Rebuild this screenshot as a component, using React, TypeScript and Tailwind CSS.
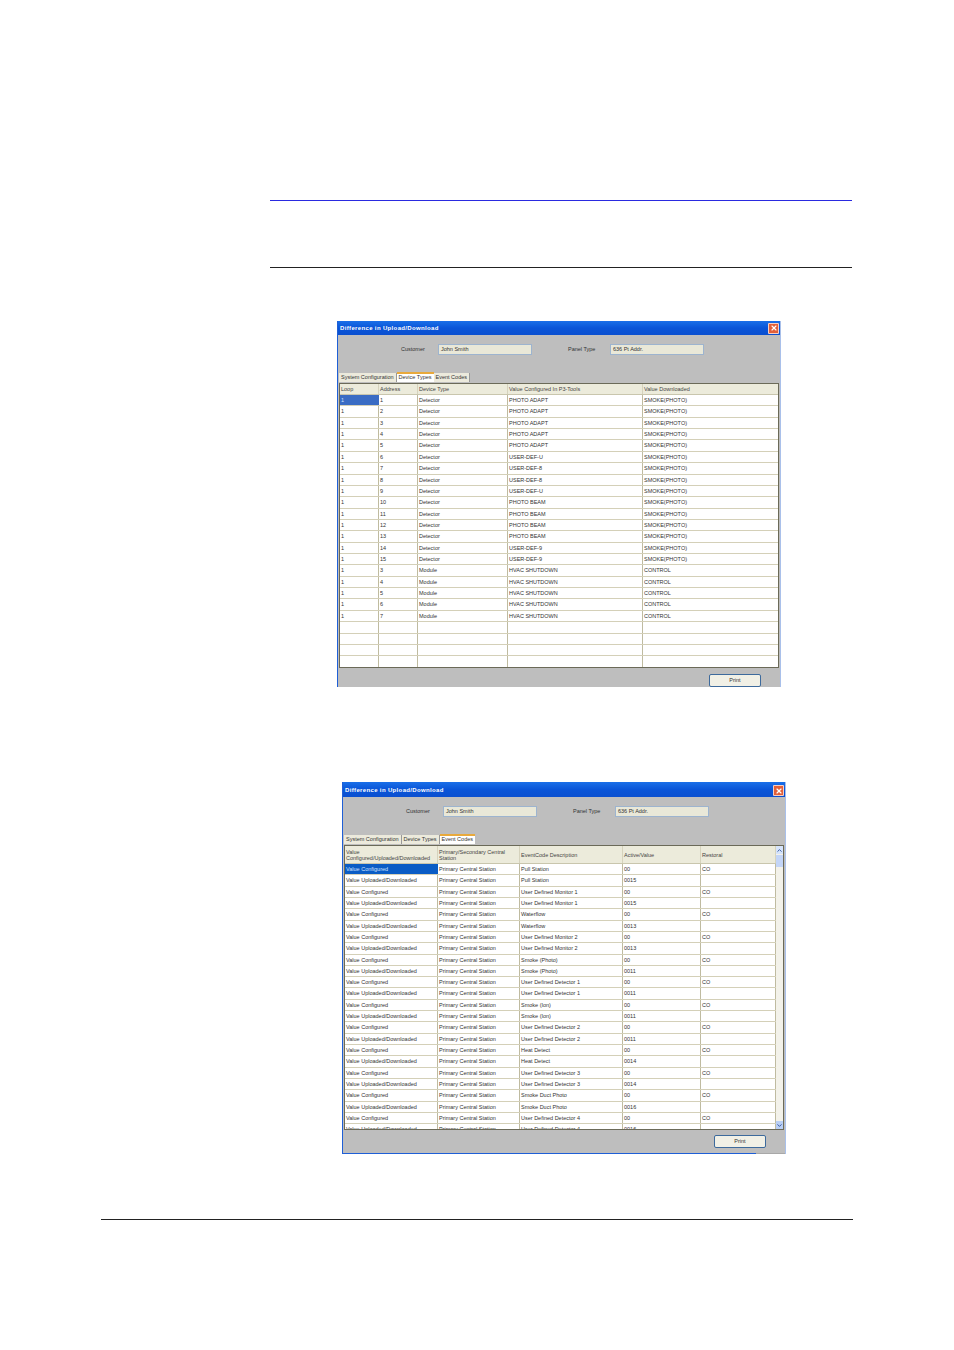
import React from "react";
import { ChevronUp, ChevronDown, X } from "lucide-react";

const detectorTypes = [
  "PHOTO ADAPT", "PHOTO ADAPT", "PHOTO ADAPT", "PHOTO ADAPT", "PHOTO ADAPT",
  "USER-DEF-U", "USER-DEF-8", "USER-DEF-8", "USER-DEF-U",
  "PHOTO BEAM", "PHOTO BEAM", "PHOTO BEAM", "PHOTO BEAM",
  "USER-DEF-9", "USER-DEF-9",
];

const deviceRows: string[][] = [
  ...detectorTypes.map((t, i) => ["1", String(i + 1), "Detector", t, "SMOKE(PHOTO)"]),
  ...[3, 4, 5, 6, 7].map((a) => ["1", String(a), "Module", "HVAC SHUTDOWN", "CONTROL"]),
  ["", "", "", "", ""],
  ["", "", "", "", ""],
  ["", "", "", "", ""],
  ["", "", "", "", ""],
];

const eventPairs = [
  ["Pull Station", "0015"],
  ["User Defined Monitor 1", "0015"],
  ["Waterflow", "0013"],
  ["User Defined Monitor 2", "0013"],
  ["Smoke (Photo)", "0011"],
  ["User Defined Detector 1", "0011"],
  ["Smoke (Ion)", "0011"],
  ["User Defined Detector 2", "0011"],
  ["Heat Detect", "0014"],
  ["User Defined Detector 3", "0014"],
  ["Smoke Duct Photo", "0016"],
  ["User Defined Detector 4", "0016"],
];

const eventRows: string[][] = eventPairs.flatMap(([name, code]) => [
  ["Value Configured", "Primary Central Station", name, "00", "CO"],
  ["Value Uploaded/Downloaded", "Primary Central Station", name, code, ""],
]);

const deviceCols = [39, 39, 90, 135, 136];
const eventCols = [93, 82, 103, 78, 75];

function Field({ value }: { value: string }) {
  return (
    <div className="w-[94px] h-[11px] bg-[#e9e8d8] border border-[#9db4cf] pl-[2px] text-[5.5px] leading-[9px] text-[#333]">
      {value}
    </div>
  );
}

function Tabs({ active }: { active: number }) {
  const names = ["System Configuration", "Device Types", "Event Codes"];
  return (
    <div className="flex items-end h-[11px] pl-[1px] text-[5.5px] text-[#333]">
      {names.map((n, i) => (
        <div
          key={n}
          className={
            i === active
              ? "h-[10px] px-[2px] bg-white border-t-2 border-[#e8a93c] leading-[6px] mb-px"
              : "h-[9px] px-[2px] bg-[#eceadc] border-r border-[#999] leading-[9px] mb-px"
          }
        >
          {n}
        </div>
      ))}
    </div>
  );
}

function Table({
  cols,
  headers,
  rows,
  headerH,
  rowH,
  selected,
}: {
  cols: number[];
  headers: string[];
  rows: string[][];
  headerH: string;
  rowH: string;
  selected: string;
}) {
  return (
    <div className="overflow-hidden h-[283px]">
      <div className={`flex bg-[#ecebdb] border-b border-[#c9c6ad] text-[#444] ${headerH}`}>
        {headers.map((h, i) => (
          <div
            key={h}
            style={{ width: cols[i] }}
            className="flex items-center pl-[1px] leading-[6px] border-r border-[#d6d3bd] shrink-0"
          >
            {h}
          </div>
        ))}
      </div>
      {rows.map((row, r) => (
        <div key={r} className={`flex ${rowH} border-b border-[#d4d0b8] bg-white text-[#333]`}>
          {row.map((c, i) => (
            <div
              key={i}
              style={{ width: cols[i], backgroundColor: r === 0 && i === 0 ? selected : undefined }}
              className={
                r === 0 && i === 0
                  ? "pl-[1px] leading-[10px] text-[#cfe0ff] shrink-0"
                  : "pl-[1px] leading-[10px] border-r border-[#bfbba0] shrink-0"
              }
            >
              {c}
            </div>
          ))}
        </div>
      ))}
    </div>
  );
}

function Dialog({
  className,
  tab,
  titleH,
  children,
}: {
  className: string;
  tab: number;
  titleH: string;
  children: React.ReactNode;
}) {
  return (
    <div className={`w-[444px] flex flex-col bg-[#bebebe] border-l border-l-[#1f5fd6] border-r border-r-[#a9c0ea] ${className}`}>
      <div className={`${titleH} flex items-center justify-between pl-[2px] pr-px bg-gradient-to-b from-[#1a6fe8] via-[#0a55d8] to-[#0a4fd0]`}>
        <span className="text-[6px] font-bold tracking-[0.35px] text-white">Difference in Upload/Download</span>
        <span className="w-[11px] h-[11px] flex items-center justify-center bg-[#e2603a] border border-white/70 rounded-[1px]">
          <X size={8} strokeWidth={3.5} color="white" />
        </span>
      </div>
      <div className="h-[37px] flex items-start pt-[9px] text-[5.5px] text-[#333]">
        <span className="w-[37px] ml-[63px] leading-[11px]">Customer</span>
        <Field value="John Smith" />
        <span className="w-[42px] ml-[36px] leading-[11px]">Panel Type</span>
        <Field value="636 Pt Addr." />
      </div>
      <Tabs active={tab} />
      <div className="mx-px flex flex-col h-[285px] bg-white border border-[#6b6a58] text-[5.5px]">
        {children}
      </div>
    </div>
  );
}

function Print() {
  return (
    <div className="w-[52px] h-[13px] mr-[19px] bg-[#f1f0e6] border border-[#3d6a9c] rounded-[2px] text-center text-[5.5px] leading-[11px] text-[#333]">
      Print
    </div>
  );
}

export default function App() {
  return (
    <div className="w-[954px] h-[1350px] bg-white pt-[200px] overflow-hidden font-['Liberation_Sans',sans-serif]">
      <div className="ml-[270px] w-[582px] h-px bg-[#2a2ae0]" />
      <div className="ml-[270px] w-[582px] h-px bg-[#222] mt-[66px]" />

      <Dialog className="ml-[337px] mt-[53px]" tab={1} titleH="h-[14px]">
        <Table
          cols={deviceCols}
          headers={["Loop", "Address", "Device Type", "Value Configured In P3-Tools", "Value Downloaded"]}
          rows={deviceRows}
          headerH="h-[11px]"
          rowH="h-[11.37px]"
          selected="#3a6cc4"
        />
      </Dialog>
      <div className="ml-[337px] w-[444px] h-[20px] -mt-px flex justify-end items-end bg-[#bebebe] border-l border-l-[#1f5fd6] border-r border-r-[#a9c0ea]">
        <Print />
      </div>

      <Dialog className="ml-[342px] mt-[95px]" tab={2} titleH="h-[15px] pt-[2px]">
        <div className="flex">
          <div className="w-[431px]">
            <Table
              cols={eventCols}
              headers={[
                "Value Configured/Uploaded/Downloaded",
                "Primary/Secondary Central Station",
                "EventCode Description",
                "Active/Value",
                "Restoral",
              ]}
              rows={eventRows}
              headerH="h-[18px]"
              rowH="h-[11.32px]"
              selected="#0a5cc5"
            />
          </div>
          <div className="w-[8px] h-[283px] flex flex-col bg-[#f3f2ea]">
            <div className="h-[8px] bg-[#d6e4fb] flex items-center justify-center">
              <ChevronUp size={7} strokeWidth={3} color="#2a4f9c" />
            </div>
            <div className="h-[12px] mt-px bg-[#c3d5f7]" />
            <div className="h-[8px] mt-auto bg-[#b9cff5] flex items-center justify-center">
              <ChevronDown size={7} strokeWidth={3} color="#2a4f9c" />
            </div>
          </div>
        </div>
      </Dialog>
      <div className="ml-[342px] w-[444px] h-[25px] -mt-px flex flex-col bg-[#bebebe] border-l border-l-[#1f5fd6] border-r border-r-[#a9c0ea]">
        <div className="flex-1 flex justify-end items-center">
          <Print />
        </div>
        <div className="flex h-px">
          <div className="w-[413px] bg-[#1f5fd6]" />
          <div className="flex-1 bg-[#a8a8a8]" />
        </div>
      </div>

      <div className="ml-[101px] w-[752px] h-px bg-[#222] mt-[65px]" />
    </div>
  );
}
